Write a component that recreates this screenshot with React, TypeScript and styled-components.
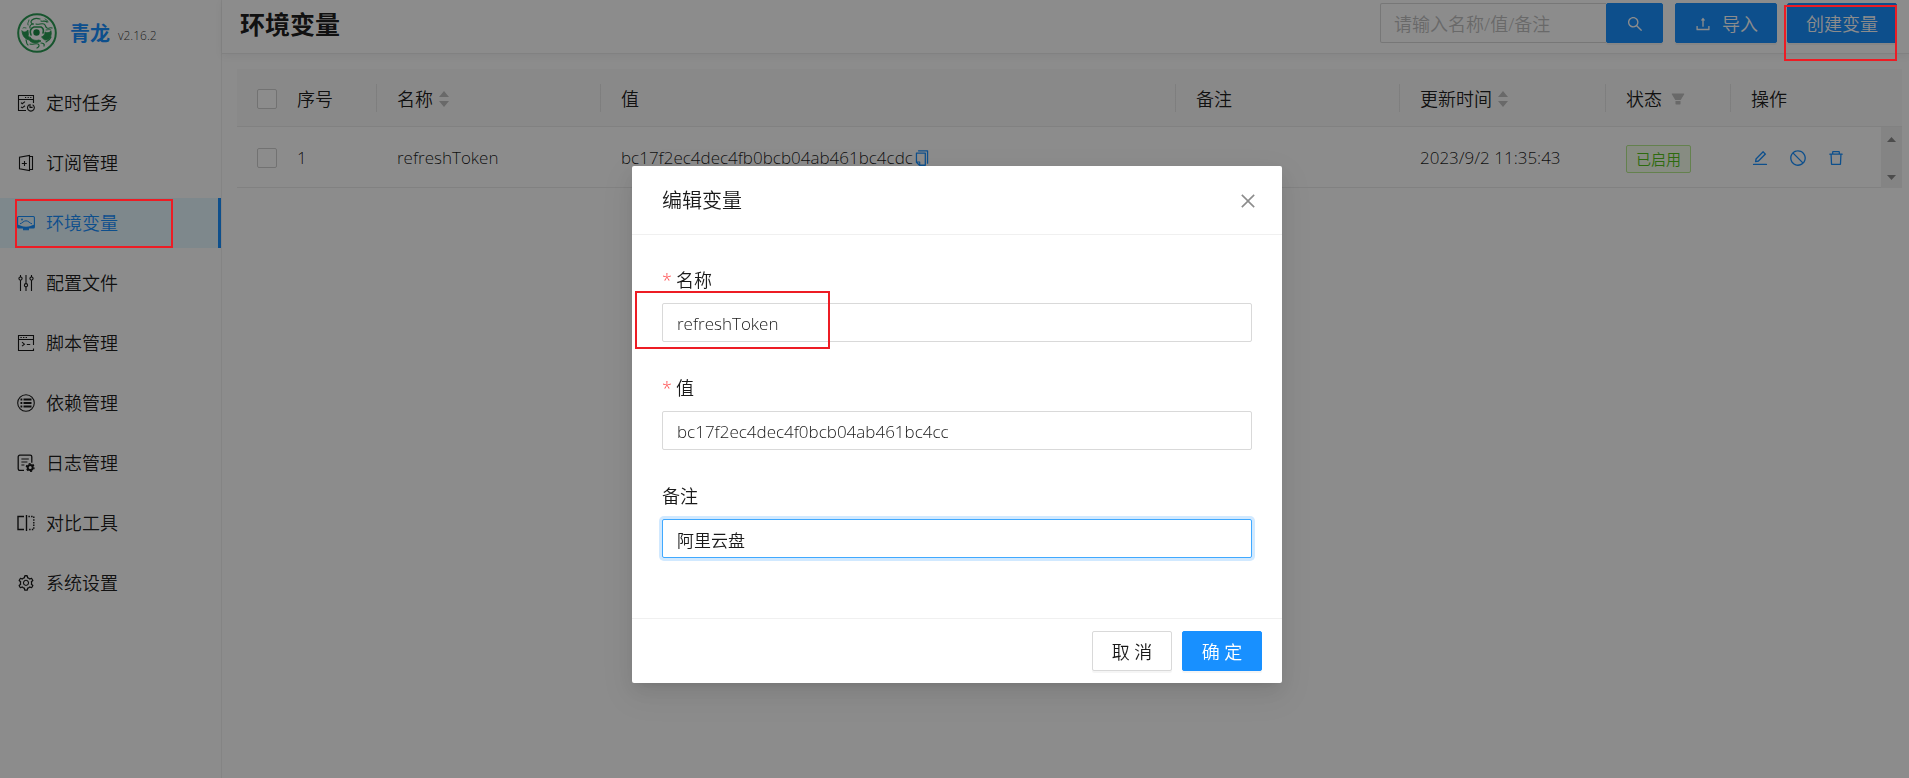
import React from 'react';
import styled, { createGlobalStyle } from 'styled-components';
import {
  AiFillFilter,
  AiOutlineClose,
  AiOutlineCopy,
  AiOutlineDelete,
  AiOutlineEdit,
  AiOutlineSearch,
  AiOutlineSetting,
  AiOutlineStop,
  AiOutlineUpload,
} from 'react-icons/ai';

const GlobalStyle = createGlobalStyle`
  *, *::before, *::after { box-sizing: border-box; }
  body {
    margin: 0;
    background: #fff;
    color: rgba(0, 0, 0, 0.9);
    font-family: 'Open Sans', 'Noto Sans CJK SC', sans-serif;
    font-size: 18px;
    font-weight: 350;
    line-height: 28px;
  }
  button, input { font: inherit; color: inherit; }
  svg { display: block; flex: none; }
`;

const Page = styled.div`
  display: flex;
  min-height: 100vh;
`;

/* ---------- Sidebar ---------- */

const Sidebar = styled.aside`
  flex: none;
  width: 222px;
  border-right: 1px solid #f0f0f0;
`;

const Brand = styled.a`
  display: flex;
  align-items: center;
  height: 66px;
  padding-left: 17px;
  color: inherit;
  text-decoration: none;
`;

const BrandName = styled.strong`
  margin-left: 13px;
  padding-top: 2px;
  color: #1890ff;
  font-size: 20px;
  font-weight: 700;
`;

const BrandVersion = styled.span`
  margin: 6px 0 0 8px;
  color: rgba(0, 0, 0, 0.8);
  font-size: 12px;
  line-height: 16px;
`;

const Menu = styled.nav`
  display: flex;
  flex-direction: column;
  gap: 10px;
  padding-top: 12px;
`;

const MenuLink = styled.a<{ $active?: boolean }>`
  display: flex;
  align-items: center;
  gap: 11px;
  height: 50px;
  padding-left: 17px;
  color: ${(p) => (p.$active ? '#1890ff' : 'inherit')};
  background: ${(p) => (p.$active ? '#e6f7ff' : 'transparent')};
  border-right: 3px solid ${(p) => (p.$active ? '#1890ff' : 'transparent')};
  text-decoration: none;
`;

/* ---------- Main area ---------- */

const Main = styled.main`
  flex: 1;
  min-width: 0;
`;

const Header = styled.header`
  display: flex;
  align-items: flex-start;
  justify-content: space-between;
  height: 54px;
  padding: 3px 12px 0 18px;
  border-bottom: 1px solid #ececec;
  box-shadow: 0 2px 8px rgba(0, 21, 41, 0.06);
`;

const Title = styled.h1`
  margin: 0;
  font-size: 25px;
  font-weight: 700;
  line-height: 42px;
`;

const Tools = styled.div`
  display: flex;
  gap: 10px;
`;

const SearchBox = styled.form`
  display: flex;
  width: 283px;
  margin-right: 2px;
`;

const SearchInput = styled.input`
  flex: 1;
  min-width: 0;
  height: 40px;
  padding: 2px 13px 0;
  background: #fff;
  border: 1px solid #d9d9d9;
  border-right: 0;
  border-radius: 2px 0 0 2px;
  outline: none;
  &::placeholder { color: #bfbfbf; opacity: 1; }
`;

const Button = styled.button<{ $primary?: boolean }>`
  display: inline-flex;
  align-items: center;
  justify-content: center;
  gap: 10px;
  height: 40px;
  min-width: 57px;
  padding: 2px 18px 0;
  color: ${(p) => (p.$primary ? '#fff' : 'inherit')};
  background: ${(p) => (p.$primary ? '#1890ff' : '#fff')};
  border: 1px solid ${(p) => (p.$primary ? '#1890ff' : '#d9d9d9')};
  border-radius: 2px;
  box-shadow: 0 2px 0 rgba(0, 0, 0, 0.04);
  white-space: nowrap;
  cursor: pointer;
`;

const TableWrap = styled.div`
  padding: 15px 7px 0 15px;
`;

const Table = styled.table`
  width: 100%;
  table-layout: fixed;
  border-collapse: separate;
  border-spacing: 0;
`;

const HeadCell = styled.th<{ $divider?: boolean }>`
  height: 58px;
  padding: 2px 20px 0;
  text-align: left;
  font-weight: 350;
  background:
    linear-gradient(rgba(0, 0, 0, 0.08), rgba(0, 0, 0, 0.08)) right center / ${(p) => (p.$divider ? '1px' : '0')} 28px no-repeat
    #fafafa;
  border-bottom: 1px solid #ececec;
`;

const Cell = styled.td`
  height: 61px;
  padding: 2px 20px 0;
  font-size: 17px;
  border-bottom: 1px solid #ececec;
`;

const ScrollCell = styled.td`
  height: 61px;
  padding: 0;
  background: #f1f1f1;
`;

const Inline = styled.div<{ $gap: number }>`
  display: flex;
  align-items: center;
  gap: ${(p) => p.$gap}px;
`;

const Checkbox = styled.input`
  display: block;
  width: 20px;
  height: 20px;
  margin: 0;
  appearance: none;
  background: #fff;
  border: 1px solid #d0d0d0;
  border-radius: 2px;
`;

const IconButton = styled.button`
  display: block;
  padding: 0;
  color: #1890ff;
  background: none;
  border: 0;
  cursor: pointer;
`;

const SortButton = styled(IconButton)`
  color: #bfbfbf;
`;

const Tag = styled.span`
  display: inline-block;
  padding: 0 9px;
  color: #52c41a;
  background: #f6ffed;
  border: 1px solid #b7eb8f;
  border-radius: 2px;
  font-size: 15px;
  line-height: 26px;
  vertical-align: middle;
`;

const ScrollBar = styled.div`
  display: flex;
  flex-direction: column;
  align-items: center;
  justify-content: space-between;
  height: 61px;
  padding: 10px 0 8px;
  color: #8b8b8b;
`;

/* ---------- Dialog ---------- */

const Overlay = styled.div`
  position: fixed;
  inset: 0;
  z-index: 10;
  display: flex;
  align-items: flex-start;
  justify-content: center;
  padding: 166px 0 24px 5px;
  background: rgba(0, 0, 0, 0.45);
`;

const Dialog = styled.section`
  position: relative;
  width: 650px;
  max-width: 100%;
  background: #fff;
  border-radius: 2px;
  box-shadow:
    0 4px 8px -5px rgba(0, 0, 0, 0.12),
    0 8px 20px 0 rgba(0, 0, 0, 0.08),
    0 11px 35px 10px rgba(0, 0, 0, 0.05);
`;

const DialogHeader = styled.header`
  display: flex;
  align-items: center;
  justify-content: space-between;
  height: 69px;
  padding: 2px 24px 0 30px;
  border-bottom: 1px solid #f0f0f0;
`;

const DialogTitle = styled.h2`
  margin: 0;
  font-size: 20px;
  font-weight: 350;
`;

const CloseButton = styled(IconButton)`
  color: rgba(0, 0, 0, 0.45);
`;

const Form = styled.form`
  display: grid;
  gap: 32px;
  padding: 31px 30px 60px;
`;

const Field = styled.div`
  display: grid;
  gap: 9px;
`;

const Label = styled.label`
  display: flex;
  gap: 4px;
`;

const Required = styled.span`
  color: #ff4d4f;
`;

const TextInput = styled.input<{ $focused?: boolean }>`
  width: 100%;
  height: 39px;
  padding: 2px 14px 0;
  font-size: 17px;
  background: #fff;
  border: 1px solid ${(p) => (p.$focused ? '#40a9ff' : '#d9d9d9')};
  border-radius: 2px;
  box-shadow: ${(p) => (p.$focused ? '0 0 0 3px rgba(24, 144, 255, 0.2)' : 'none')};
  outline: none;
`;

const DialogFooter = styled.footer`
  display: flex;
  justify-content: flex-end;
  gap: 10px;
  padding: 12px 20px;
  border-top: 1px solid #f0f0f0;
`;

const FooterButton = styled(Button)`
  width: 80px;
`;

/* ---------- Red highlight frames ---------- */

const Frame = styled.div`
  position: absolute;
  z-index: 20;
  border: 2px solid #ed1c24;
  pointer-events: none;
`;

const MenuFrame = styled(Frame)`
  top: 199px;
  left: 15px;
  width: 158px;
  height: 49px;
`;

const CreateFrame = styled(Frame)`
  top: 5px;
  right: 12px;
  width: 113px;
  height: 56px;
`;

const NameFrame = styled(Frame)`
  top: 125px;
  left: 3px;
  width: 195px;
  height: 58px;
`;

/* ---------- Drawings ---------- */

const Logo = () => (
  <svg width="40" height="40" viewBox="0 0 40 40" fill="none" stroke="#2a9c54" strokeLinecap="round" aria-hidden="true">
    <circle cx="20" cy="20" r="18.8" strokeWidth="2" />
    <path
      d="M5 18c2 2 4 1 6-1 0 3 1 4 0 6 1 1 2 2 2 4-4 0-8-4-8-9zM25 24c2-1 3-3 3-5 2 1 4 1 6-1 1 4-1 9-5 9-2 0-3-1-4-3zM13 24c2 3 5 4 9 3l2 1c-3 2-8 3-11 0z"
      fill="#2a9c54"
      strokeWidth="0.8"
    />
    <circle cx="19.5" cy="19.5" r="3.200" fill="#1c8a45" stroke="none" />
    <path d="M14 22c-2-4 0-7 3-8h7c2 1 3 3 2 6" strokeWidth="1.600" />
    <path d="M13 15c-1-3 2-4 4-4-3 0-4-2-2-4 2-2 5-2 8-1M19 11c3 1 5-1 8 0 2 1 1 3 3 4s3-1 5 0M24 8c2 1 4-1 6 1" strokeWidth="1.2" />
    <path d="M11 12c-1-2 1-3 1-5M28 6c1 1 3 1 3 3M6 15c1-1 2 0 3 0M29 17c2 0 3-1 5 0" strokeWidth="0.9" />
    <path d="M13 31c3 1 5-1 8 0 2 1 1 3-1 4M24 30c2 0 4 1 3 3M29 29c2-1 4-2 5-5M9 27c1 2 0 4 2 5" strokeWidth="1.2" />
  </svg>
);

const Glyph = ({ children }: { children: React.ReactNode }) => (
  <svg width="18" height="18" viewBox="0 0 18 18" fill="none" stroke="currentColor" strokeWidth="1.1" aria-hidden="true">
    {children}
  </svg>
);

const CronIcon = () => (
  <Glyph>
    <path d="M9 16.5H1.5v-15h15V9M1.5 5.500h15" />
    <path d="M8 3.5h1.2M10.6 3.5h1.2M13.2 3.5h1.2M4 8.6l1.2 1.1L8 7.6M4 12.8l1.2 1.1L8 11.8" />
    <path d="M15.6 10.8a3.4 3.4 0 1 1-3.4 0M13 10v3.4h2.6" />
  </Glyph>
);

const SubscriptionIcon = () => (
  <Glyph>
    <path d="M12.500 1.4v15.2L2.500 14.8V3.2zM12.500 2.500h3v13h-3M4.8 9.500h5M7.500 7v5" />
  </Glyph>
);

const EnvIcon = () => (
  <Glyph>
    <rect x="0.6" y="2.500" width="16.8" height="11.500" rx="1" />
    <path d="M1 10.800c2.500.6 4 2 8 2s5.500-1.400 8-2V14H1z" fill="currentColor" stroke="none" />
    <path d="M3 9.800c2.500-.6 3.400-3 6-3s3.500 2.400 6 3" strokeWidth="1" />
    <circle cx="5" cy="5.500" r="0.9" fill="currentColor" stroke="none" />
    <path d="M6.600 14.500h4.800v1.200H6.600z" fill="currentColor" />
  </Glyph>
);

const ConfigIcon = () => (
  <Glyph>
    <path d="M3.500 1v2M3.500 6.200V17M9 1v8.400M9 12.800V17M14.500 1v2M14.500 6.200V17" />
    <circle cx="3.500" cy="4.600" r="1.600" />
    <circle cx="9" cy="11.200" r="1.600" />
    <circle cx="14.500" cy="4.600" r="1.600" />
  </Glyph>
);

const ScriptIcon = () => (
  <Glyph>
    <path d="M16.500 11V1.500h-15v15h15V14.500M1.500 5.500h15" />
    <path d="M3.400 3.500h1.400M6 3.500h1.400M8.600 3.500H10M5 8.200l2.400 2-2.400 2M9.800 10.500h3.400" />
  </Glyph>
);

const DependenceIcon = () => (
  <Glyph>
    <circle cx="9" cy="9" r="8.300" />
    <path d="M3.500 5.500h1.800M3.500 9h1.800M3.500 12.500h1.800M6.500 5.500h8M6.500 9h8M6.500 12.500h8" strokeWidth="2" />
  </Glyph>
);

const LogIcon = () => (
  <Glyph>
    <path d="M7 16.400H2.800a1.600 1.600 0 0 1-1.600-1.600V2.800a1.600 1.600 0 0 1 1.600-1.600h10.400a1.600 1.600 0 0 1 1.600 1.600v6" strokeWidth="1.300" />
    <path d="M4.400 5h7.400M4.400 8h6M4.400 11h3" />
    <circle cx="13.200" cy="13.400" r="2.500" strokeWidth="2" />
    <circle cx="13.200" cy="13.400" r="3.900" strokeWidth="1.200" strokeDasharray="2 2.080" />
  </Glyph>
);

const DiffIcon = () => (
  <Glyph>
    <path d="M7 2.500H1v13h6" strokeWidth="1.400" />
    <path d="M9.500 1v16" strokeWidth="1.400" />
    <path d="M11.400 2.500h5.400v13h-5.400" strokeDasharray="1.500 1.200" strokeWidth="1.400" />
  </Glyph>
);

const SortIcon = () => (
  <svg width="10" height="16" viewBox="0 0 10 16" fill="currentColor" aria-hidden="true">
    <path d="M5 0l5 6H0zM5 16L0 10h10z" />
  </svg>
);

const Arrow = ({ down }: { down?: boolean }) => (
  <svg width="9" height="5" viewBox="0 0 9 5" fill="currentColor" aria-hidden="true">
    <path d={down ? 'M0 0h9L4.500 5z' : 'M0 5h9L4.500 0z'} />
  </svg>
);

const menuItems = [
  { label: '定时任务', icon: <CronIcon /> },
  { label: '订阅管理', icon: <SubscriptionIcon /> },
  { label: '环境变量', icon: <EnvIcon />, active: true },
  { label: '配置文件', icon: <ConfigIcon /> },
  { label: '脚本管理', icon: <ScriptIcon /> },
  { label: '依赖管理', icon: <DependenceIcon /> },
  { label: '日志管理', icon: <LogIcon /> },
  { label: '对比工具', icon: <DiffIcon /> },
  { label: '系统设置', icon: <AiOutlineSetting size={18} /> },
];

const VariableTable = () => (
  <Table>
    <colgroup>
      <col style={{ width: 40 }} />
      <col style={{ width: 100 }} />
      <col style={{ width: 224 }} />
      <col />
      <col style={{ width: 224 }} />
      <col style={{ width: 206 }} />
      <col style={{ width: 125 }} />
      <col style={{ width: 150 }} />
      <col style={{ width: 21 }} />
    </colgroup>
    <thead>
      <tr>
        <HeadCell><Checkbox type="checkbox" aria-label="全选" /></HeadCell>
        <HeadCell $divider>序号</HeadCell>
        <HeadCell $divider>
          <Inline $gap={6}>名称<SortButton type="button" aria-label="按名称排序"><SortIcon /></SortButton></Inline>
        </HeadCell>
        <HeadCell $divider>值</HeadCell>
        <HeadCell $divider>备注</HeadCell>
        <HeadCell $divider>
          <Inline $gap={6}>更新时间<SortButton type="button" aria-label="按更新时间排序"><SortIcon /></SortButton></Inline>
        </HeadCell>
        <HeadCell $divider>
          <Inline $gap={8}>状态<SortButton type="button" aria-label="筛选状态"><AiFillFilter size={16} /></SortButton></Inline>
        </HeadCell>
        <HeadCell colSpan={2}>操作</HeadCell>
      </tr>
    </thead>
    <tbody>
      <tr>
        <Cell><Checkbox type="checkbox" aria-label="选择 refreshToken" /></Cell>
        <Cell>1</Cell>
        <Cell>refreshToken</Cell>
        <Cell>
          <Inline $gap={0}>
            bc17f2ec4dec4fb0bcb04ab461bc4cdc
            <IconButton type="button" aria-label="复制"><AiOutlineCopy size={18} /></IconButton>
          </Inline>
        </Cell>
        <Cell />
        <Cell>2023/9/2 11:35:43</Cell>
        <Cell><Tag>已启用</Tag></Cell>
        <Cell>
          <Inline $gap={20}>
            <IconButton type="button" aria-label="编辑"><AiOutlineEdit size={18} /></IconButton>
            <IconButton type="button" aria-label="禁用"><AiOutlineStop size={18} /></IconButton>
            <IconButton type="button" aria-label="删除"><AiOutlineDelete size={18} /></IconButton>
          </Inline>
        </Cell>
        <ScrollCell>
          <ScrollBar><Arrow /><Arrow down /></ScrollBar>
        </ScrollCell>
      </tr>
    </tbody>
  </Table>
);

const EditDialog = () => (
  <Overlay>
    <Dialog role="dialog" aria-modal="true" aria-labelledby="dialog-title">
      <DialogHeader>
        <DialogTitle id="dialog-title">编辑变量</DialogTitle>
        <CloseButton type="button" aria-label="关闭"><AiOutlineClose size={20} /></CloseButton>
      </DialogHeader>
      <Form id="env-form">
        <Field>
          <Label htmlFor="env-name"><Required>*</Required>名称</Label>
          <TextInput id="env-name" defaultValue="refreshToken" />
        </Field>
        <Field>
          <Label htmlFor="env-value"><Required>*</Required>值</Label>
          <TextInput id="env-value" defaultValue="bc17f2ec4dec4f0bcb04ab461bc4cc" />
        </Field>
        <Field>
          <Label htmlFor="env-remark">备注</Label>
          <TextInput id="env-remark" defaultValue="阿里云盘" $focused />
        </Field>
      </Form>
      <DialogFooter>
        <FooterButton type="button">取 消</FooterButton>
        <FooterButton type="submit" form="env-form" $primary>确 定</FooterButton>
      </DialogFooter>
      <NameFrame />
    </Dialog>
  </Overlay>
);

export default function App() {
  return (
    <>
      <GlobalStyle />
      <Page>
        <Sidebar>
          <Brand href="#">
            <Logo />
            <BrandName>青龙</BrandName>
            <BrandVersion>v2.16.2</BrandVersion>
          </Brand>
          <Menu>
            {menuItems.map((item) => (
              <MenuLink key={item.label} href="#" $active={item.active}>
                {item.icon}
                {item.label}
              </MenuLink>
            ))}
          </Menu>
        </Sidebar>
        <Main>
          <Header>
            <Title>环境变量</Title>
            <Tools>
              <SearchBox role="search">
                <SearchInput type="text" placeholder="请输入名称/值/备注" aria-label="搜索" />
                <Button type="button" aria-label="搜索变量" $primary><AiOutlineSearch size={18} /></Button>
              </SearchBox>
              <Button type="button" $primary><AiOutlineUpload size={18} />导入</Button>
              <Button type="button" $primary>创建变量</Button>
            </Tools>
          </Header>
          <TableWrap>
            <VariableTable />
          </TableWrap>
        </Main>
      </Page>
      <EditDialog />
      <MenuFrame />
      <CreateFrame />
    </>
  );
}
